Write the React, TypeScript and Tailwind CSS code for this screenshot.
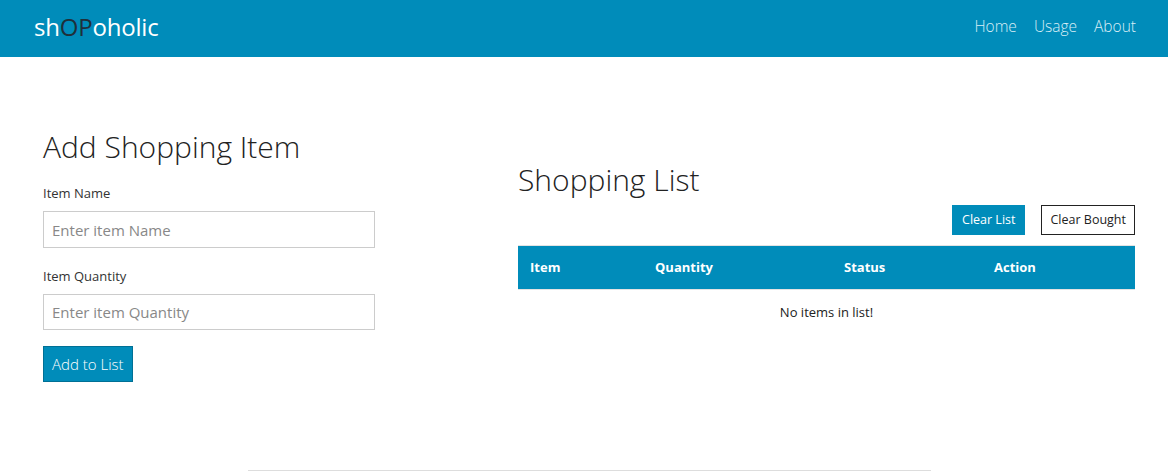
import React from "react";

const font = { fontFamily: '"Open Sans", "Noto Sans", sans-serif' };

const Header: React.FC = () => (
    <header className="h-[57px] bg-[#008cba] flex items-center justify-between pl-[34px] pr-[32px]">
        <div className="text-[24px] leading-none text-white -mt-[3px] tracking-[-0.2px]">
            sh<span className="text-[#1f2f3a]">OP</span>oholic
        </div>
        <nav className="flex gap-[17px] text-[15.5px] font-light text-[#d9eef6] -mt-[4px]">
            <a>Home</a>
            <a>Usage</a>
            <a>About</a>
        </nav>
    </header>
);

const AddItemForm: React.FC = () => (
    <div className="w-[332px] mt-[70px]">
        <h2 className="text-[30px] leading-[40px] font-light text-[#222]">Add Shopping Item</h2>
        <label className="block mt-[17px] text-[13px] leading-[18px] text-[#333]">Item Name</label>
        <input
            className="block w-full h-[37px] mt-[9px] border border-[#cccccc] px-[8px] text-[15px] text-[#333] placeholder:text-[#888] outline-none"
            placeholder="Enter item Name"
        />
        <label className="block mt-[19px] text-[13px] leading-[18px] text-[#333]">Item Quantity</label>
        <input
            className="block w-full h-[36px] mt-[9px] border border-[#cccccc] px-[8px] text-[15px] text-[#333] placeholder:text-[#888] outline-none"
            placeholder="Enter item Quantity"
        />
        <button className="mt-[16px] h-[36px] px-[8px] bg-[#008cba] border border-[#007095] text-white text-[15px] font-light">
            Add to List
        </button>
    </div>
);

const ShoppingList: React.FC = () => {
    const columns = [
        { name: "Item", w: "w-[125px]" },
        { name: "Quantity", w: "w-[189px]" },
        { name: "Status", w: "w-[150px]" },
        { name: "Action", w: "flex-1" },
    ];

    return (
        <div className="w-[617px] mt-[103px]">
            <h2 className="text-[30px] leading-[40px] font-light text-[#222]">Shopping List</h2>
            <div className="flex justify-end gap-[16px] mt-[5px]">
                <button className="h-[30px] px-[10px] bg-[#008cba] text-white text-[12.5px]">Clear List</button>
                <button className="h-[30px] px-[8px] border border-[#222] text-[#222] text-[12.5px] bg-white">
                    Clear Bought
                </button>
            </div>
            <div className="mt-[10px] border-y border-[#e3e3e3]">
                <div className="flex h-[43px] items-center bg-[#008cba] pl-[12px] text-white text-[13px] font-bold">
                    {columns.map((c) => (
                        <div key={c.name} className={c.w}>
                            {c.name}
                        </div>
                    ))}
                </div>
            </div>
            <div className="text-center text-[13px] text-[#222] mt-[13px]">No items in list!</div>
        </div>
    );
};

export default function App() {
    return (
        <div className="min-h-[476px] bg-white" style={font}>
            <Header />
            <main className="flex pl-[43px] gap-[143px]">
                <AddItemForm />
                <ShoppingList />
            </main>
            <div className="mt-[88px] w-[683px] border-t border-[#dddddd] ml-[248px]" />
        </div>
    );
}
